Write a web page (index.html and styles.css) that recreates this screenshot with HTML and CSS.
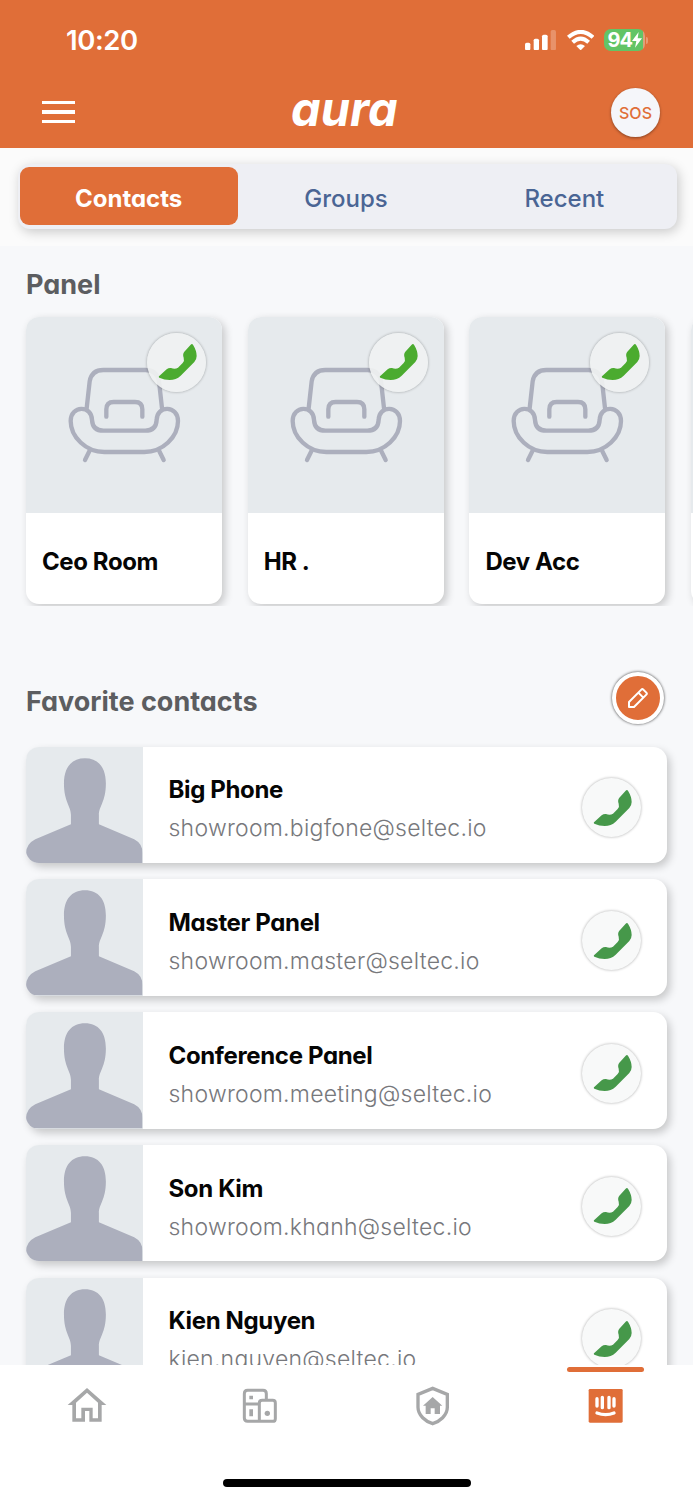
FILE: index.html
```
<!DOCTYPE html>
<html lang="en">
<head>
<meta charset="utf-8">
<title>Contacts</title>
<link rel="stylesheet" href="styles.css">
</head>
<body>
<svg class="defs" aria-hidden="true">
  <symbol id="phone" viewBox="-90 -90 180 180"><path fill="currentColor" d="M-54 43 L-31 22 Q-25 17 -18 18 Q-6 23 3 17 L17 3 Q23 -4 20 -13 Q16 -24 22 -31 L41 -52 Q45 -56 48 -52 Q59 -34 59 -18 Q59 -8 52 0 L11 41 Q-3 54 -22 54 Q-38 54 -53 47 Q-56 46 -54 43Z"/></symbol>
  <symbol id="chair" viewBox="0 0 588 588"><g fill="none" stroke="#acafbd" stroke-width="13" stroke-linecap="round"><path d="M182 274 L191 193 Q197 159 232 159 H358 Q393 159 399 193 L408 274"/><path d="M134 312 C134 264 198 264 198 309 Q200 341 232 341 H358 Q390 341 392 309 C392 264 456 264 456 312 C456 360 410 405 355 405 H235 C180 405 134 360 134 312Z"/><path d="M241 299 V277 Q241 255 263 255 H327 Q349 255 349 277 V299M190 403 L177 429M400 403 L413 429"/></g></symbol>
  <symbol id="person" viewBox="0 0 350 350"><path fill="#acafbd" d="M177 34 C218 34 240 62 240 110 C240 165 219 178 219 204 V232 L325 277 Q350 290 350 318 V350 H0 V318 Q2 290 28 277 L135 232 V204 C135 178 114 165 114 110 C114 62 136 34 177 34Z"/></symbol>
</svg>
<div class="screen">
  <header class="header">
    <div class="status">
      <span class="time">10:20</span>
      <div class="indicators">
        <svg class="signal" viewBox="0 0 93 61" fill="#fff"><rect y="38" width="16" height="23" rx="5"/><rect x="26" y="26" width="16" height="35" rx="5"/><rect x="51" y="14" width="17" height="47" rx="5"/><rect x="77" width="16" height="61" rx="5" opacity=".25"/></svg>
        <svg class="wifi" viewBox="0 0 82 62" fill="none" stroke="#fff" stroke-width="12"><path d="M4 22 Q41 -11 78 22M17 37 Q41 15 65 37"/><path fill="#fff" stroke="none" d="M28 48 Q41 37 54 48 L41 61Z"/></svg>
        <div class="battery"><span class="charge">94</span><svg class="bolt" viewBox="0 0 30 48"><path fill="#fff" d="M20 0 L0 27 H13 L9 47 L30 19 H17Z"/></svg></div>
        <span class="nub"></span>
      </div>
    </div>
    <div class="appbar">
      <div class="menu"><i></i><i></i><i></i></div>
      <div class="logo">aura</div>
      <div class="sos">SOS</div>
    </div>
  </header>
  <div class="tabbar">
    <div class="tabs"><div class="tab active">Contacts</div><div class="tab">Groups</div><div class="tab">Recent</div></div>
  </div>
  <main class="main">
    <h2 class="heading">Panel</h2>
    <div class="panels">
      <article class="panel"><div class="photo"><svg class="chair"><use href="#chair"/></svg><div class="call"><svg><use href="#phone"/></svg></div></div><div class="room">Ceo Room</div></article>
      <article class="panel"><div class="photo"><svg class="chair"><use href="#chair"/></svg><div class="call"><svg><use href="#phone"/></svg></div></div><div class="room">HR .</div></article>
      <article class="panel"><div class="photo"><svg class="chair"><use href="#chair"/></svg><div class="call"><svg><use href="#phone"/></svg></div></div><div class="room">Dev Acc</div></article>
      <article class="panel"><div class="photo"></div></article>
    </div>
    <div class="favhead">
      <h2 class="heading fav">Favorite contacts</h2>
      <div class="edit"><svg viewBox="0 0 60 60" fill="none" stroke="#fff" stroke-width="6" stroke-linejoin="round"><path d="M3 57 V42 L40 5 Q43 2 46 5 L55 14 Q58 17 55 20 L18 57Z M31 14 L46 29"/></svg></div>
    </div>
    <div class="list">
      <article class="contact"><svg class="avatar"><use href="#person"/></svg><div class="info"><div class="name">Big Phone</div><div class="mail">showroom.bigfone@seltec.io</div></div><div class="call"><svg><use href="#phone"/></svg></div></article>
      <article class="contact"><svg class="avatar"><use href="#person"/></svg><div class="info"><div class="name">Master Panel</div><div class="mail">showroom.master@seltec.io</div></div><div class="call"><svg><use href="#phone"/></svg></div></article>
      <article class="contact"><svg class="avatar"><use href="#person"/></svg><div class="info"><div class="name">Conference Panel</div><div class="mail">showroom.meeting@seltec.io</div></div><div class="call"><svg><use href="#phone"/></svg></div></article>
      <article class="contact"><svg class="avatar"><use href="#person"/></svg><div class="info"><div class="name">Son Kim</div><div class="mail">showroom.khanh@seltec.io</div></div><div class="call"><svg><use href="#phone"/></svg></div></article>
      <article class="contact"><svg class="avatar"><use href="#person"/></svg><div class="info"><div class="name">Kien Nguyen</div><div class="mail">kien.nguyen@seltec.io</div></div><div class="call"><svg><use href="#phone"/></svg></div></article>
    </div>
  </main>
  <nav class="nav">
    <div class="items">
      <div class="item"><svg viewBox="0 0 120 120"><path fill="#a6a7a8" fill-rule="evenodd" d="M60 6 L118 57 H104 V107 H67 V75 H54 V107 H16 V57 H2Z M60 20 L93 50 V97 H77 V65 H43 V97 H27 V50Z"/></svg></div>
      <div class="item"><svg viewBox="0 0 120 120"><path fill="none" stroke="#a6a7a8" stroke-width="9" d="M79 43 V23 Q79 13 69 13 H23 Q13 13 13 23 V96 Q13 106 23 106 H98 Q106 106 106 98 V51 Q106 43 98 43 H67 Q58 43 58 51 V106M13 54 H58"/><path fill="#a6a7a8" d="M28 29h11v11h-11zM28 70h11v21h-11z"/><circle cx="82" cy="82" r="8" fill="#a6a7a8"/></svg></div>
      <div class="item"><svg viewBox="0 0 120 120"><path fill="none" stroke="#a6a7a8" stroke-width="10" d="M59 7 L103 25 V64 C103 88 80 107 59 113 C38 107 15 88 15 64 V25Z"/><path fill="#a6a7a8" d="M59 33 L88 59 H81 V84 H65 V67 H53 V84 H38 V59 H30Z"/></svg></div>
      <div class="item current"><svg viewBox="0 0 120 120"><rect x="8" y="9" width="102" height="101" rx="4" fill="#e06e38"/><path fill="none" stroke="#fff" stroke-width="10" stroke-linecap="round" d="M33 38 V60M49 34 V65M69 34 V65M84 38 V60M33 81 Q59 91 84 81"/></svg></div>
    </div>
    <div class="homebar"></div>
  </nav>
</div>
</body>
</html>
```
FILE: styles.css
```
* { box-sizing: border-box; }
body { margin: 0; font-family: Inter, "Noto Sans", sans-serif; font-feature-settings: "cv11"; }
svg { display: block; }
.defs { display: none; }
.screen { width: 693px; height: 1500px; display: flex; flex-direction: column; overflow: hidden; background: #f7f8fa; }

.header { height: 147.5px; flex: none; background: #e06e38; color: #fff; }
.status { height: 80px; padding: 0 45px 0 66px; display: flex; align-items: center; justify-content: space-between; }
.time { font-size: 27.5px; font-weight: 600; letter-spacing: -0.4px; }
.indicators { display: flex; align-items: center; }
.signal { width: 31px; height: 20.3px; }
.wifi { width: 27.3px; height: 20.7px; margin-left: 11px; }
.battery { width: 41px; height: 22px; margin-left: 10px; border-radius: 7px; padding-left: 3.5px; display: flex; align-items: center; background: linear-gradient(90deg, #62c466 94%, #dca27c 94%); }
.charge { font-size: 20px; font-weight: 700; letter-spacing: -1px; line-height: 22px; }
.bolt { width: 10px; height: 16px; }
.nub { width: 2px; height: 7px; margin-left: 1px; border-radius: 0 2px 2px 0; background: #e99a74; }
.appbar { height: 64px; padding: 0 33px 0 42px; display: grid; grid-template-columns: 1fr 112px 1fr; align-items: center; }
.menu { width: 49px; display: grid; gap: 6.5px; }
.menu i { width: 33px; height: 3.3px; background: #fff; }
.logo { margin: -6px 0 0 -4px; font-size: 47px; line-height: 50px; font-weight: 700; font-style: italic; letter-spacing: 0; }
.sos { justify-self: end; width: 49px; height: 49px; border-radius: 50%; background: #f5f6fa; color: #e06e38; font-size: 16px; font-weight: 500; line-height: 50px; text-align: center; box-shadow: 0 1px 3px #0006; }

.tabbar { height: 98.5px; flex: none; padding: 16px 16px 0 18px; background: #fbfbfb; }
.tabs { height: 65px; padding: 3px 2px; display: grid; grid-template-columns: repeat(3, 1fr); border-radius: 12px; background: #eeeff4; box-shadow: 2px 3px 12px #0003; }
.tab { height: 58.5px; line-height: 64px; text-align: center; color: #4a6594; font-size: 24px; font-weight: 500; text-indent: -3px; }
.tab.active { border-radius: 9px; background: #e06e38; color: #fff; font-weight: 700; text-indent: -1px; }

.main { height: 1119px; flex: none; overflow: hidden; padding-top: 22.5px; }
.heading { margin: 0 0 0 26px; font-size: 27px; line-height: 32px; font-weight: 700; color: #5c5d60; }
.heading.fav { padding-top: 7px; }
.panels { margin-top: 9px; height: 296.5px; padding: 7.5px 0 0 26px; display: flex; gap: 25.7px; overflow: hidden; }
.panel { width: 196px; height: 287px; flex: none; border-radius: 13px; background: #fff; box-shadow: 3px 3px 8px #0003; }
.photo { position: relative; height: 196px; border-radius: 13px 13px 0 0; background: #e6eaed; }
.chair { width: 196px; height: 196px; }
.photo .call { position: absolute; top: 15.5px; right: 16px; color: #4bab2f; background: #f0f2f2e8; }
.room { padding-left: 16px; font-size: 24px; line-height: 30px; padding-top: 34px; font-weight: 700; color: #050505; letter-spacing: -0.4px; }
.call { width: 59px; height: 59px; flex: none; border-radius: 50%; color: #46984a; background: #f8f9f9; box-shadow: 0 0 3px #0005; }
.call svg { width: 60px; height: 60px; margin: -0.5px; }

.favhead { margin-top: 66px; padding-right: 29.5px; display: flex; align-items: center; justify-content: space-between; }
.edit { width: 52px; height: 52px; border: 4px solid #fff; border-radius: 50%; background: #e06e38; box-shadow: 0 0 3px #000c; display: grid; place-items: center; }
.edit svg { width: 20px; height: 20px; }
.list { margin: 22.5px 26px 0; display: grid; gap: 16.3px; }
.contact { width: 641px; height: 116.5px; padding-right: 26px; display: flex; align-items: center; border-radius: 14px; background: #fff; box-shadow: 3px 4px 8px #0003; }
.contact .call { margin: 6px 0 0; }
.avatar { width: 116.5px; height: 116.5px; flex: none; border-radius: 13px 0 0 13px; background: #e6eaed; }
.info { flex: 1; padding: 9px 0 0 26px; }
.name { font-size: 24px; line-height: 30px; font-weight: 700; color: #050505; letter-spacing: -0.35px; }
.mail { margin-top: 8px; font-size: 23px; line-height: 30px; font-weight: 300; color: #77787c; letter-spacing: 0.25px; }

.nav { height: 135px; flex: none; background: #fff; }
.items { height: 114px; display: grid; grid-template-columns: repeat(4, 1fr); }
.item { position: relative; padding-top: 21px; display: flex; justify-content: center; }
.item svg { width: 40px; height: 40px; }
.current::before { content: ""; position: absolute; top: 2px; left: 47px; width: 77.5px; height: 5px; border-radius: 3px; background: #e06e38; }
.homebar { width: 248px; height: 8px; margin: 0 auto; border-radius: 4px; background: #000; }
```
